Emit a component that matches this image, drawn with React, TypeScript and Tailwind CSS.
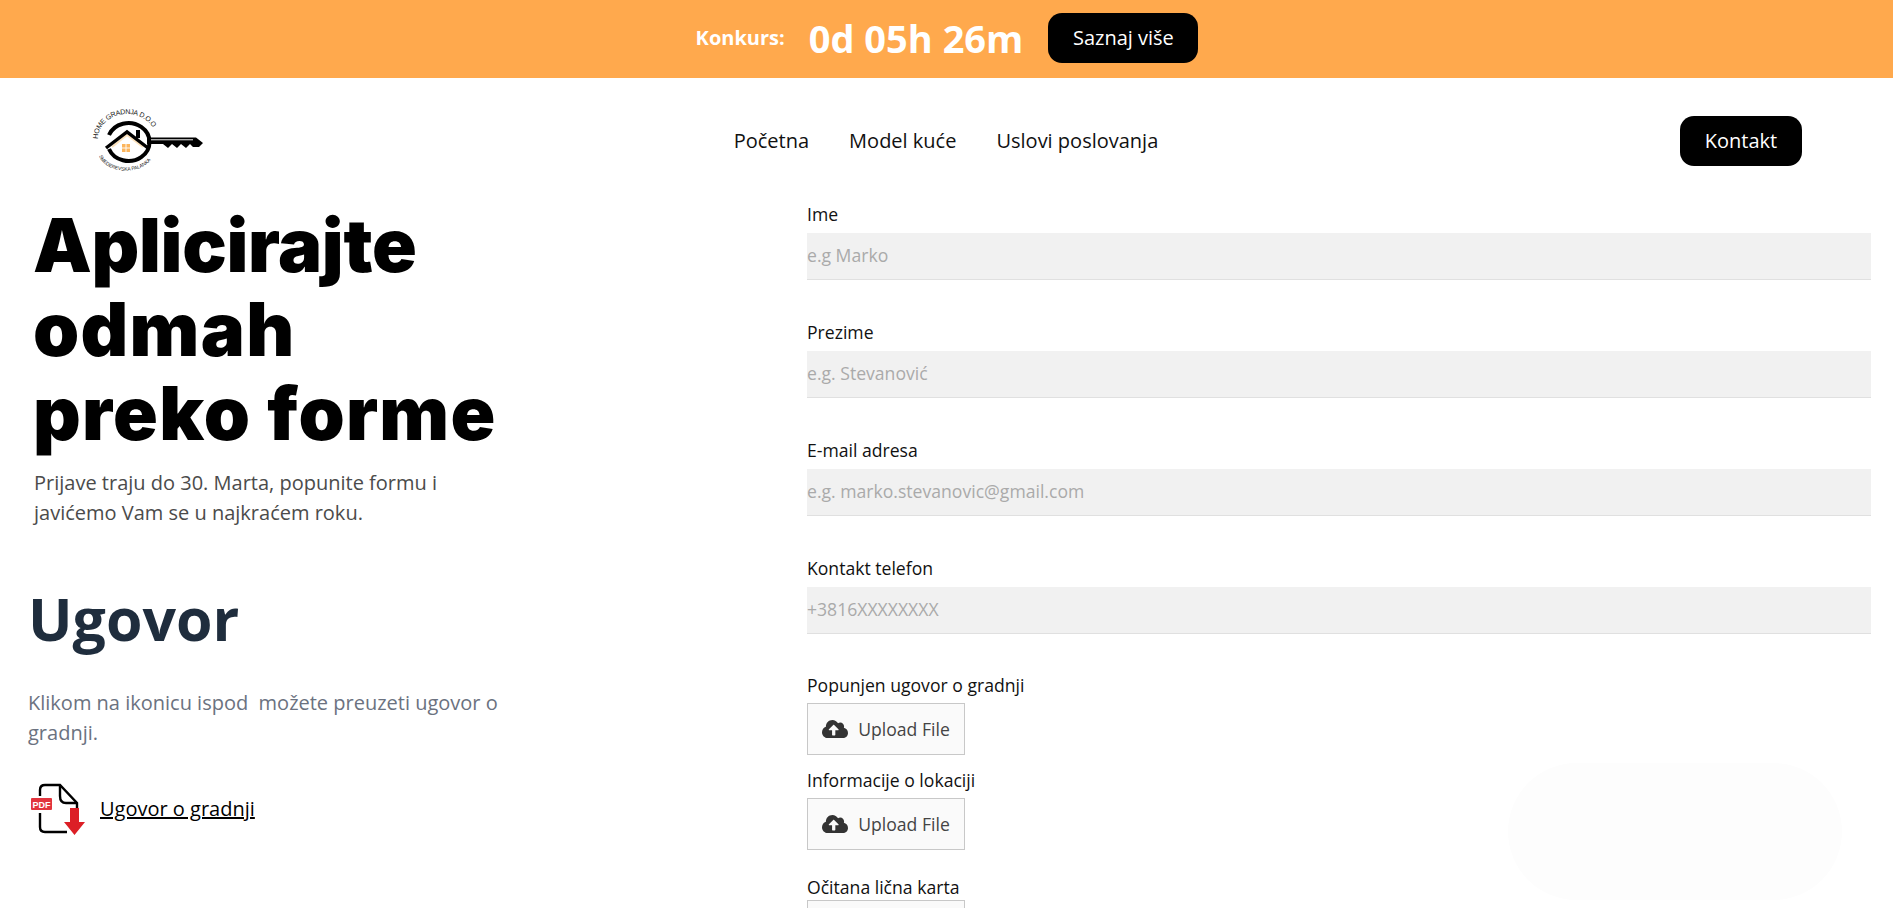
import React from "react";
import { FaCloudUploadAlt } from "react-icons/fa";

const Logo = () => (
  <svg viewBox="0 0 106 66" className="h-[66px] w-[106px] overflow-visible">
    <defs>
      <path id="logoTop" d="M1 31 A29 25 0 0 1 59 31" />
      <path id="logoBottom" d="M2 48 A28 20 0 0 0 56 48" />
    </defs>
    <text fontSize="7" letterSpacing="-0.3" fontFamily="'Liberation Sans', sans-serif" fill="#111">
      <textPath href="#logoTop">HOME GRADNJA D.O.O</textPath>
    </text>
    <text fontSize="5" letterSpacing="-0.1" fontFamily="'Liberation Sans', sans-serif" fill="#222">
      <textPath href="#logoBottom">SMEDEREVSKA PALANKA</textPath>
    </text>
    <path d="M12 27 A21 19 0 1 1 12 41" fill="none" stroke="#000" strokeWidth="4" />
    <path d="M15 39 L30 27 L46 39" fill="#fff" stroke="#fde3bd" strokeWidth="2" />
    <path d="M9 40 L30 24 L51 40" fill="none" stroke="#000" strokeWidth="3.4" />
    <rect x="39" y="22" width="4" height="8" fill="#000" />
    <rect x="25" y="36" width="8" height="8" fill="#fcb55c" />
    <path d="M29 36 V44 M25 40 H33" stroke="#fff" strokeWidth="0.9" />
    <path d="M50 29.5 H99 L106 35 L102 39 H96 L93 36 L89 40 L84 36 L80 40 L75 36 L71 40 L66 36 H50 Z" fill="#000" />
    <rect x="54" y="31" width="42" height="1.4" fill="#aaa" />
  </svg>
);

const PdfIcon = () => (
  <svg viewBox="0 0 56 52" className="h-[52px] w-[56px]">
    <path
      d="M10 13 V7 C10 3 12 2 15 2 H30 L47 20 V29 M10 30 V44 C10 47 12 49 15 49 H37"
      fill="none"
      stroke="#000"
      strokeWidth="2.4"
    />
    <path d="M30 2 V13 C30 17 32 20 36 20 H47" fill="none" stroke="#000" strokeWidth="2.4" />
    <rect x="1" y="15" width="21" height="12" rx="1" fill="#e2343d" />
    <text x="11.5" y="24.5" textAnchor="middle" fontSize="9" fontWeight="700" fontFamily="'Liberation Sans', sans-serif" fill="#fff">
      PDF
    </text>
    <path d="M40 25 H49 V39 H55 L44.5 52 L34 39 H40 Z" fill="#dc1f26" />
  </svg>
);

const textFields = [
  { label: "Ime", placeholder: "e.g Marko" },
  { label: "Prezime", placeholder: "e.g. Stevanović" },
  { label: "E-mail adresa", placeholder: "e.g. marko.stevanovic@gmail.com" },
  { label: "Kontakt telefon", placeholder: "+3816XXXXXXXX" },
];

const UploadButton = () => (
  <button className="flex h-[52px] w-[158px] items-center justify-center gap-[10px] border border-[#c8c8c8] bg-[#fafafa] text-[17.6px] text-[#444]">
    <FaCloudUploadAlt className="h-[26px] w-[26px] text-[#333]" />
    <span>Upload File</span>
  </button>
);

export default function App() {
  const labelClass = "block text-[17.6px] leading-[22px] text-[#111]";

  return (
    <div className="relative h-[908px] overflow-hidden bg-white font-['Open_Sans',sans-serif] text-black">
      {/* Countdown banner */}
      <div className="flex h-[78px] items-center justify-center bg-[#ffa94d] pb-[2px] pl-[1px]">
        <span className="mr-[24px] text-[20px] font-bold text-white">Konkurs:</span>
        <span className="mr-[25px] text-[38px] font-bold text-white">0d 05h 26m</span>
        <a className="flex h-[50px] w-[150px] items-center justify-center rounded-[14px] bg-black text-[20px] text-white">
          Saznaj više
        </a>
      </div>

      {/* Nav */}
      <header className="flex h-[125px] items-center">
        <div className="flex flex-1 pl-[97px]">
          <Logo />
        </div>
        <nav className="mr-[7px] flex gap-[40px] text-[20px] text-[#111]">
          <a>Početna</a>
          <a>Model kuće</a>
          <a>Uslovi poslovanja</a>
        </nav>
        <div className="flex flex-1 justify-end pr-[91px]">
          <a className="flex h-[50px] w-[122px] items-center justify-center rounded-[14px] bg-black text-[20px] text-white">
            Kontakt
          </a>
        </div>
      </header>

      <main className="flex">
        {/* Left column */}
        <section className="w-[807px] shrink-0">
          <div className="pl-[34px]">
            <h1 className="-ml-[1px] font-['Inter',sans-serif] text-[74px] leading-[84px] font-black">
              <span className="tracking-[-0.3px]">Aplicirajte</span>
              <br />
              <span className="tracking-[1.3px]">odmah</span>
              <br />
              <span className="tracking-[1.25px]">preko forme</span>
            </h1>
            <p className="mt-[13px] w-[420px] text-[20px] leading-[30px] text-[#4b4b4b]">
              Prijave traju do 30. Marta, popunite formu i javićemo Vam se u najkraćem roku.
            </p>
          </div>
          <div className="pl-[28px]">
            <h2 className="mt-[54px] text-[59px] leading-[72px] font-bold text-[#1f2d3d]">Ugovor</h2>
            <p className="mt-[34px] w-[490px] text-[20px] leading-[30px] whitespace-pre-wrap text-[#6b7280]">
              Klikom na ikonicu ispod  možete preuzeti ugovor o gradnji.
            </p>
            <a className="mt-[35px] flex items-center gap-[14px] pl-[2px]">
              <PdfIcon />
              <span className="text-[20px] underline">Ugovor o gradnji</span>
            </a>
          </div>
        </section>

        {/* Form */}
        <form className="flex-1 pr-[22px]">
          {textFields.map((f) => (
            <div key={f.label} className="mb-[41px]">
              <label className={`mb-[8px] ${labelClass}`}>{f.label}</label>
              <input
                placeholder={f.placeholder}
                className="block h-[47px] w-full border-b border-[#e0e0e0] bg-[#f1f1f1] pb-[2px] text-[17.6px] outline-none placeholder:text-[#aaa]"
              />
            </div>
          ))}
          <label className={`-mt-[1px] mb-[7px] ${labelClass}`}>Popunjen ugovor o gradnji</label>
          <UploadButton />
          <label className={`mt-[14px] mb-[7px] ${labelClass}`}>Informacije o lokaciji</label>
          <UploadButton />
          <label className={`mt-[26px] mb-[2px] ${labelClass}`}>Očitana lična karta</label>
          <UploadButton />
        </form>
      </main>

      {/* very faint blob bottom right */}
      <div className="absolute top-[763px] left-[1508px] h-[137px] w-[334px] rounded-[70px] bg-[#fdfdfd]" />
    </div>
  );
}
